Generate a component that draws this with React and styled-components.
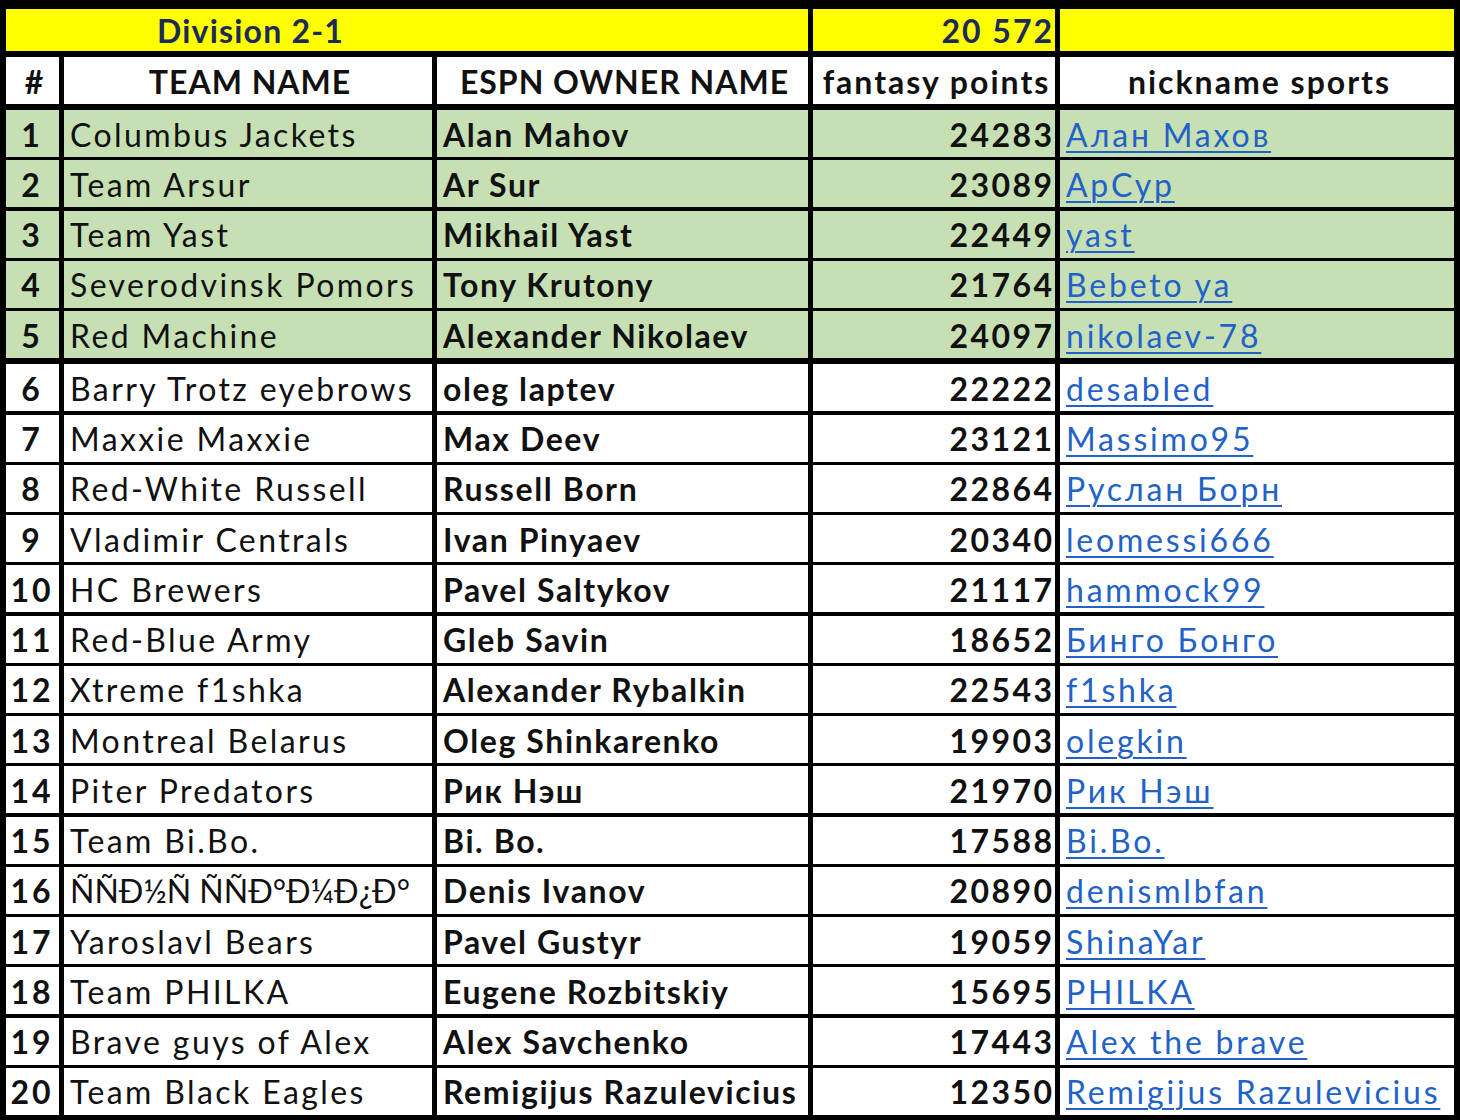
import React from "react";
import styled, { createGlobalStyle } from "styled-components";

const rows = [
  [1, "Columbus Jackets", "Alan Mahov", 24283, "Алан Махов"],
  [2, "Team Arsur", "Ar Sur", 23089, "АрСур"],
  [3, "Team Yast", "Mikhail Yast", 22449, "yast"],
  [4, "Severodvinsk Pomors", "Tony Krutony", 21764, "Bebeto ya"],
  [5, "Red Machine", "Alexander Nikolaev", 24097, "nikolaev-78"],
  [6, "Barry Trotz eyebrows", "oleg laptev", 22222, "desabled"],
  [7, "Maxxie Maxxie", "Max Deev", 23121, "Massimo95"],
  [8, "Red-White Russell", "Russell Born", 22864, "Руслан Борн"],
  [9, "Vladimir Centrals", "Ivan Pinyaev", 20340, "leomessi666"],
  [10, "HC Brewers", "Pavel Saltykov", 21117, "hammock99"],
  [11, "Red-Blue Army", "Gleb Savin", 18652, "Бинго Бонго"],
  [12, "Xtreme f1shka", "Alexander Rybalkin", 22543, "f1shka"],
  [13, "Montreal Belarus", "Oleg Shinkarenko", 19903, "olegkin"],
  [14, "Piter Predators", "Рик Нэш", 21970, "Рик Нэш"],
  [15, "Team Bi.Bo.", "Bi. Bo.", 17588, "Bi.Bo."],
  [
    16,
    "\u00D1\u00D1\u00D0\u00BD\u00D1 \u00D1\u00D1\u00D0\u00B0\u00D0\u00BC\u00D0\u00BF\u00D0\u00B0",
    "Denis Ivanov",
    20890,
    "denismlbfan",
  ],
  [17, "Yaroslavl Bears", "Pavel Gustyr", 19059, "ShinaYar"],
  [18, "Team PHILKA", "Eugene Rozbitskiy", 15695, "PHILKA"],
  [19, "Brave guys of Alex", "Alex Savchenko", 17443, "Alex the brave"],
  [20, "Team Black Eagles", "Remigijus Razulevicius", 12350, "Remigijus Razulevicius"],
];

const GlobalStyle = createGlobalStyle`
  html, body {
    margin: 0;
    padding: 0;
    background: #000;
  }
  body {
    font-family: Lato, "Noto Sans", "DejaVu Sans", sans-serif;
  }
`;

export default function App() {
  return (
    <>
      <GlobalStyle />
      <Sheet>
        <Row $height={42}>
          <TitleCell>Division 2-1</TitleCell>
          <Cell $bg="#ffff00" $align="right" $bold $ls={2} $color="#1c2a5a">
            20 572
          </Cell>
          <Cell $bg="#ffff00" />
        </Row>
        <Row $height={47} $top={6}>
          <HeadCell $ls={1}>#</HeadCell>
          <HeadCell $ls={1}>TEAM NAME</HeadCell>
          <HeadCell $ls={1}>ESPN OWNER NAME</HeadCell>
          <HeadCell $ls={2}>fantasy points</HeadCell>
          <HeadCell $ls={2}>nickname sports</HeadCell>
        </Row>
        <Body>
          {rows.map(([n, team, owner, pts, nick]) => {
            const bg = n <= 5 ? "#c6e0b4" : "#ffffff";
            return (
              <Row key={n} $height={47} $top={n === 6 ? 6.25 : n === 1 ? 0 : 3.25}>
                <Cell $bg={bg} $align="center" $bold $ls={3}>
                  {n}
                </Cell>
                <Cell $bg={bg} $ls={n === 16 ? 0 : 2.4}>
                  {team}
                </Cell>
                <Cell $bg={bg} $bold $ls={1.6}>
                  {owner}
                </Cell>
                <Cell $bg={bg} $align="right" $bold $ls={2.4}>
                  {pts}
                </Cell>
                <Cell $bg={bg} $ls={2.8}>
                  <Link href="#">{nick}</Link>
                </Cell>
              </Row>
            );
          })}
        </Body>
      </Sheet>
    </>
  );
}

const Sheet = styled.div`
  width: 1460px;
  height: 1120px;
  box-sizing: border-box;
  background: #000;
  padding: 9px 6px 0;
  display: flex;
  flex-direction: column;
`;

const Body = styled.div`
  margin-top: 6px;
  display: flex;
  flex-direction: column;
`;

const Row = styled.div`
  display: grid;
  grid-template-columns: 53px 368px 371px 242px 394px;
  column-gap: 5px;
  height: ${(p) => p.$height}px;
  margin-top: ${(p) => p.$top || 0}px;
`;

const Cell = styled.div`
  background: ${(p) => p.$bg || "#fff"};
  color: ${(p) => p.$color || "#111"};
  font-size: 32px;
  font-weight: ${(p) => (p.$bold ? 700 : 400)};
  letter-spacing: ${(p) => p.$ls || 0}px;
  display: flex;
  align-items: center;
  justify-content: ${(p) =>
    p.$align === "center" ? "center" : p.$align === "right" ? "flex-end" : "flex-start"};
  padding: 2px ${(p) => (p.$align === "right" ? Math.max(0, 3 - (p.$ls || 0)) : 6)}px 0
    ${(p) => (p.$align === "center" ? (p.$ls || 0) + 2 : 6)}px;
  white-space: nowrap;
  overflow: hidden;
  box-sizing: border-box;
  line-height: 1;
`;

const TitleCell = styled(Cell)`
  grid-column: 1 / span 3;
  background: #ffff00;
  color: #1c2a5a;
  font-weight: 700;
  letter-spacing: 1.2px;
  padding-left: 151px;
`;

const HeadCell = styled(Cell)`
  justify-content: center;
  font-weight: 700;
  padding: 2px 0 0 ${(p) => (p.$ls || 0) + 3}px;
`;

const Link = styled.a`
  color: #2262c8;
  text-decoration: underline;
  text-decoration-thickness: 2px;
  text-underline-offset: 4px;
`;
